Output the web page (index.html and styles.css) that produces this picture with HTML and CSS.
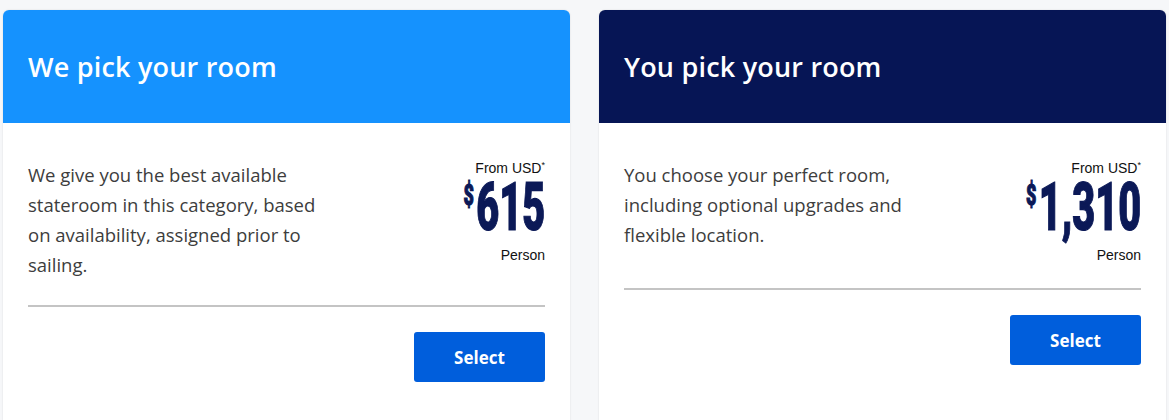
FILE: index.html
```html
<!DOCTYPE html>
<html lang="en">
<head>
<meta charset="utf-8">
<title>Room selection</title>
<link rel="stylesheet" href="styles.css">
</head>
<body>
<div class="options">
  <section class="card">
    <header class="card-head head-light">
      <h2 class="card-title">We pick your room</h2>
    </header>
    <div class="card-body">
      <div class="row">
        <p class="desc">We give you the best available stateroom in this category, based on availability, assigned prior to sailing.</p>
        <div class="price">
          <div class="from">From USD<sup>*</sup></div>
          <div class="amount-wrap"><span class="amount"><span class="cur">$</span><span class="num">615</span></span></div>
          <div class="per">Person</div>
        </div>
      </div>
      <hr class="divider">
      <div class="actions"><button class="select-btn">Select</button></div>
    </div>
  </section>
  <section class="card">
    <header class="card-head head-dark">
      <h2 class="card-title">You pick your room</h2>
    </header>
    <div class="card-body">
      <div class="row">
        <p class="desc">You choose your perfect room, including optional upgrades and flexible location.</p>
        <div class="price">
          <div class="from">From USD<sup>*</sup></div>
          <div class="amount-wrap"><span class="amount"><span class="cur">$</span><span class="num">1,310</span></span></div>
          <div class="per">Person</div>
        </div>
      </div>
      <hr class="divider">
      <div class="actions"><button class="select-btn">Select</button></div>
    </div>
  </section>
</div>
</body>
</html>
```
FILE: styles.css
```css
html, body {
  margin: 0;
  padding: 0;
  background: #f6f7f9;
}
body {
  font-family: "Open Sans", "Liberation Sans", sans-serif;
}
.options {
  display: grid;
  grid-template-columns: 567px 567px;
  column-gap: 29px;
  padding: 10px 3px 0 3px;
}
.card {
  background: #ffffff;
  border-radius: 6px;
  overflow: hidden;
  box-shadow: 0 0 2px rgba(0, 0, 0, 0.12);
  height: 420px;
  display: flex;
  flex-direction: column;
}
.card-head {
  height: 113px;
  display: flex;
  align-items: center;
  padding: 0 25px;
  box-sizing: border-box;
}
.head-light { background: #1592fe; }
.head-dark { background: #061555; }
.card-title {
  margin: 0;
  color: #ffffff;
  font-size: 27px;
  font-weight: 600;
  letter-spacing: 0.2px;
}
.card-body {
  padding: 37px 25px 0 25px;
}
.row {
  display: flex;
  justify-content: space-between;
  align-items: flex-start;
}
.desc {
  margin: 0;
  width: 300px;
  font-size: 18.5px;
  line-height: 30px;
  color: #3d3d3d;
}
.price {
  text-align: right;
  font-family: "Liberation Sans", Arial, sans-serif;
  color: #111111;
}
.from {
  font-size: 14px;
  line-height: 16px;
}
.from sup {
  font-size: 9px;
  vertical-align: 5px;
  line-height: 0;
}
.amount-wrap {
  margin-top: 7px;
  height: 50px;
  display: flex;
  justify-content: flex-end;
}
.amount {
  display: flex;
  align-items: flex-start;
  font-family: Roboto, sans-serif;
  font-weight: 900;
  color: #0b1957;
  transform: scaleX(0.6);
  transform-origin: right center;
  -webkit-text-stroke: 1.2px #0b1957;
}
.num {
  font-size: 66px;
  line-height: 50px;
}
.cur {
  font-size: 30px;
  line-height: 30px;
  margin-top: -3px;
  margin-right: 4px;
}
.per {
  font-size: 14px;
  line-height: 16px;
  margin-top: 14px;
}
.divider {
  border: 0;
  height: 2px;
  background: #c4c4c4;
  margin: 25px 0 25px 0;
}
.actions {
  display: flex;
  justify-content: flex-end;
}
.select-btn {
  width: 131px;
  height: 50px;
  border: 0;
  border-radius: 3px;
  background: #005edc;
  color: #ffffff;
  font-family: "Open Sans", sans-serif;
  font-weight: 700;
  font-size: 17px;
  cursor: pointer;
}
```
